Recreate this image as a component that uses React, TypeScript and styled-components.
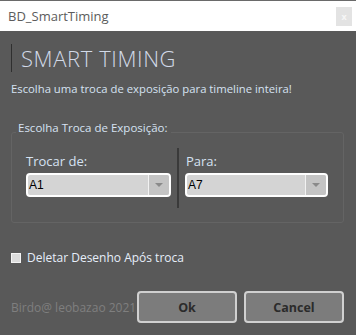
import styled, {createGlobalStyle} from 'styled-components';

const GlobalStyle = createGlobalStyle`
  html, body {
    margin: 0;
    padding: 0;
    background: #595959;
  }
  * {
    box-sizing: border-box;
  }
`;

const Window = styled.div`
  width: 356px;
  height: 335px;
  display: flex;
  flex-direction: column;
  background: #595959;
  font-family: 'Open Sans', 'Noto Sans', sans-serif;
  overflow: hidden;
`;

const TitleBar = styled.div`
  height: 31px;
  flex: none;
  display: flex;
  align-items: center;
  justify-content: space-between;
  padding: 0 4px 0 8px;
  background: #ffffff;
  border-top: 1px solid #6a6a6a;
  color: #5c5c5c;
  font-size: 13px;
`;

const CloseButton = styled.div`
  width: 16px;
  height: 19px;
  display: flex;
  align-items: center;
  justify-content: center;
  background: #e3e3e3;
  color: #f6f6f6;
  font-size: 9px;
  font-weight: 700;
`;

const Body = styled.div`
  flex: 1;
  display: flex;
  flex-direction: column;
  padding: 13px 11px 0 11px;
`;

const Heading = styled.h1`
  margin: 0;
  height: 28px;
  display: flex;
  align-items: center;
  padding-left: 9px;
  border-left: 1px solid #2f2f2f;
  color: #d2dae8;
  font-size: 22px;
  font-weight: 300;
  letter-spacing: 0.6px;
`;

const Subtitle = styled.p`
  margin: 9px 0 0 0;
  color: #d6e2f2;
  font-size: 11.3px;
`;

const GroupBox = styled.fieldset`
  margin: 24px 1px 0 0;
  padding: 0 14px 14px 14px;
  border: 1px solid #646464;
  border-radius: 3px;
`;

const Legend = styled.legend`
  margin-left: -10px;
  padding: 0 3px 10px 2px;
  color: #d6e2f2;
  font-size: 11.5px;
`;

const Columns = styled.div`
  display: grid;
  grid-template-columns: 145px 2px 143px;
  column-gap: 6px;
  align-items: start;
  margin-top: -12px;
`;

const Column = styled.div`
  display: flex;
  flex-direction: column;
  padding-top: 19px;
`;

const Divider = styled.div`
  width: 2px;
  height: 60px;
  margin-top: 15px;
  background: #3a3a3a;
`;

const FieldLabel = styled.div<{$indent?: number}>`
  color: #d6e2f2;
  font-size: 13px;
  line-height: 18px;
  margin-bottom: 3px;
  margin-left: ${(p) => p.$indent ?? 0}px;
`;

const Combo = styled.div`
  height: 24px;
  display: flex;
  align-items: stretch;
  border: 2px solid #ffffff;
  border-radius: 4px;
  background: #d4d4d4;
  overflow: hidden;
`;

const ComboValue = styled.div`
  flex: 1;
  display: flex;
  align-items: center;
  padding-left: 1px;
  color: #000000;
  font-family: 'Liberation Sans', Arial, sans-serif;
  font-size: 12px;
`;

const ComboArrow = styled.div`
  width: 21px;
  display: flex;
  align-items: center;
  justify-content: center;
  border-left: 1px solid #f2f2f2;
  background: #c4c4c4;
`;

const CheckRow = styled.label`
  margin-top: 26px;
  display: flex;
  align-items: center;
  gap: 6px;
  color: #e6eef9;
  font-size: 12px;
`;

const CheckBox = styled.span`
  width: 10px;
  height: 10px;
  border: 1px solid #f4f4f4;
  background: #dcdcdc;
`;

const Footer = styled.div`
  margin-top: 25px;
  display: flex;
  align-items: center;
  gap: 7px;
`;

const Credit = styled.div`
  width: 119px;
  color: #7f7f7f;
  font-size: 12px;
  white-space: nowrap;
`;

const Button = styled.button`
  width: 100px;
  height: 32px;
  border: 2px solid #d0d0d0;
  border-radius: 4px;
  background: #7c7c7c;
  color: #2b2b2b;
  font-family: 'Open Sans', 'Noto Sans', sans-serif;
  font-size: 12.5px;
  font-weight: 700;
  padding: 0;
`;

function Select({value}: {value: string}) {
  return (
    <Combo>
      <ComboValue>{value}</ComboValue>
      <ComboArrow>
        <svg width='8' height='4' viewBox='0 0 8 4'>
          <path d='M0 0 L8 0 L4 4 Z' fill='#8a8a8a' />
        </svg>
      </ComboArrow>
    </Combo>
  );
}

export default function App() {
  return (
    <>
      <GlobalStyle />
      <Window>
        <TitleBar>
          <span>BD_SmartTiming</span>
          <CloseButton>x</CloseButton>
        </TitleBar>
        <Body>
          <Heading>SMART TIMING</Heading>
          <Subtitle>Escolha uma troca de exposição para timeline inteira!</Subtitle>

          <GroupBox>
            <Legend>Escolha Troca de Exposição:</Legend>
            <Columns>
              <Column>
                <FieldLabel>Trocar de:</FieldLabel>
                <Select value='A1' />
              </Column>
              <Divider />
              <Column>
                <FieldLabel $indent={1}>Para:</FieldLabel>
                <Select value='A7' />
              </Column>
            </Columns>
          </GroupBox>

          <CheckRow>
            <CheckBox />
            Deletar Desenho Após troca
          </CheckRow>

          <Footer>
            <Credit>Birdo@ leobazao 2021</Credit>
            <Button>Ok</Button>
            <Button>Cancel</Button>
          </Footer>
        </Body>
      </Window>
    </>
  );
}
